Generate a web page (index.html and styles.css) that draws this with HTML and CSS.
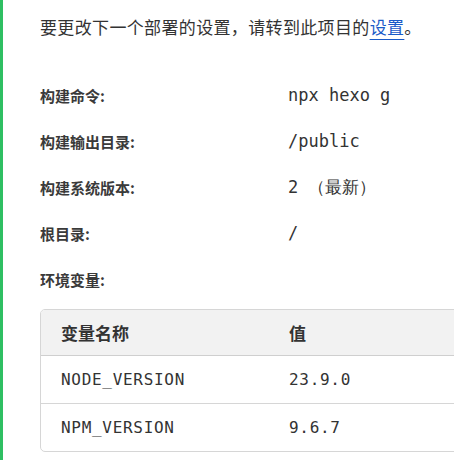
FILE: index.html
```html
<!DOCTYPE html>
<html lang="zh">
<head>
<meta charset="utf-8">
<link rel="stylesheet" href="styles.css">
</head>
<body>
<div class="panel">
  <p class="intro">要更改下一个部署的设置，请转到此项目的<a href="#" class="link">设置</a>。</p>
  <div class="settings">
    <div class="label">构建命令:</div><div class="value">npx hexo g</div>
    <div class="label">构建输出目录:</div><div class="value">/public</div>
    <div class="label">构建系统版本:</div><div class="value">2 （最新）</div>
    <div class="label">根目录:</div><div class="value">/</div>
    <div class="label">环境变量:</div><div class="value"></div>
  </div>
  <div class="table">
    <div class="row head">
      <div class="cell">变量名称</div><div class="cell">值</div>
    </div>
    <div class="row">
      <div class="cell mono">NODE_VERSION</div><div class="cell mono">23.9.0</div>
    </div>
    <div class="row last">
      <div class="cell mono">NPM_VERSION</div><div class="cell mono">9.6.7</div>
    </div>
  </div>
</div>
</body>
</html>
```
FILE: styles.css
```css
html, body {
  margin: 0;
  padding: 0;
  background: #fff;
  overflow: hidden;
}
body {
  width: 454px;
  height: 460px;
  font-family: "Noto Sans CJK SC", "Noto Sans", sans-serif;
  color: #333;
}
.panel {
  border-left: 3px solid #2fbf62;
  height: 460px;
  padding-left: 37px;
  box-sizing: border-box;
  overflow: hidden;
}
.intro {
  margin: 0;
  padding-top: 14px;
  font-size: 17px;
  line-height: 26px;
  letter-spacing: 0.35px;
  color: #333;
  white-space: nowrap;
}
.link {
  color: #1a5ac8;
  text-decoration: underline;
  text-decoration-color: #1a5ac8;
  text-underline-offset: 5px;
  text-decoration-thickness: 1px;
}
.settings {
  margin-top: 32px;
  display: grid;
  grid-template-columns: 248px 1fr;
  grid-auto-rows: 46px;
  align-items: center;
}
.label {
  font-size: 15px;
  font-weight: 700;
  color: #3a3a3a;
}
.value {
  font-family: "DejaVu Sans Mono", monospace;
  font-size: 17px;
  color: #333;
  white-space: nowrap;
}
.table {
  margin-top: 7px;
  width: 520px;
  border: 1px solid #d6d6d6;
  border-radius: 5px;
  overflow: hidden;
}
.row {
  display: grid;
  grid-template-columns: 247px 1fr;
  height: 47px;
  align-items: center;
  border-bottom: 1px solid #d6d6d6;
}
.row.last {
  border-bottom: none;
}
.row.head {
  height: 45px;
  background: #f2f2f2;
  border-bottom: 1px solid #cfcfcf;
}
.cell {
  padding-left: 20px;
  white-space: nowrap;
}
.row.head .cell {
  font-size: 17px;
  font-weight: 700;
  color: #333;
}
.row.head .cell + .cell {
  padding-left: 1px;
}
.cell.mono + .cell.mono {
  padding-left: 1px;
}
.mono {
  font-family: "DejaVu Sans Mono", monospace;
  font-size: 16px;
  color: #333;
  letter-spacing: 0.7px;
}
```
